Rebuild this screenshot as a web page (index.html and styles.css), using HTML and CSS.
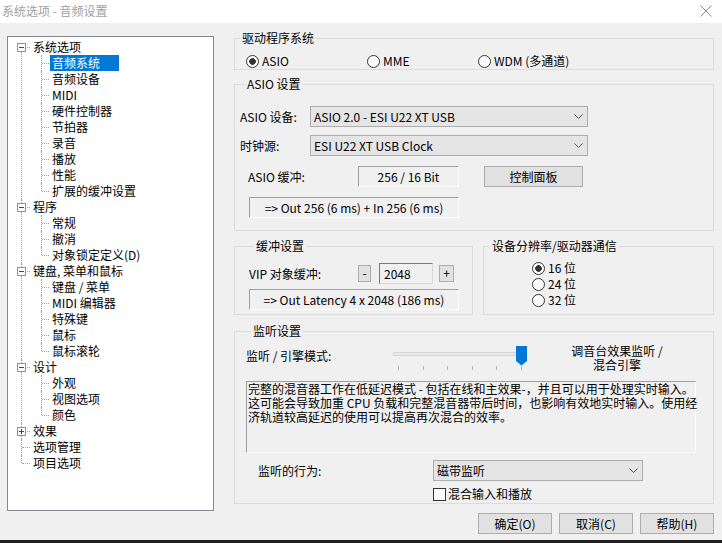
FILE: index.html
```html
<!DOCTYPE html>
<html lang="zh-CN">
<head>
  <meta charset="UTF-8" />
  <title>系统选项 - 音频设置</title>
  <link rel="stylesheet" href="styles.css">
</head>
<body>
  <div class="window">
    <div class="titlebar">
      <span class="title">系统选项 - 音频设置</span>
      <svg class="close" width="12" height="12" viewBox="0 0 12 12"><path d="M0.5 0.5L11.5 11.5M11.5 0.5L0.5 11.5" stroke="#8c8c8c" stroke-width="1" fill="none"/></svg>
    </div>

    <div class="main">
      <div class="tree-box">
        <ul class="tree">
          <li><span class="tog"></span><span class="lbl">系统选项</span>
            <ul>
              <li><span class="lbl sel">音频系统</span></li>
              <li><span class="lbl">音频设备</span></li>
              <li><span class="lbl">MIDI</span></li>
              <li><span class="lbl">硬件控制器</span></li>
              <li><span class="lbl">节拍器</span></li>
              <li><span class="lbl">录音</span></li>
              <li><span class="lbl">播放</span></li>
              <li><span class="lbl">性能</span></li>
              <li><span class="lbl">扩展的缓冲设置</span></li>
            </ul>
          </li>
          <li><span class="tog"></span><span class="lbl">程序</span>
            <ul>
              <li><span class="lbl">常规</span></li>
              <li><span class="lbl">撤消</span></li>
              <li><span class="lbl">对象锁定定义(D)</span></li>
            </ul>
          </li>
          <li><span class="tog"></span><span class="lbl">键盘, 菜单和鼠标</span>
            <ul>
              <li><span class="lbl">键盘 / 菜单</span></li>
              <li><span class="lbl">MIDI 编辑器</span></li>
              <li><span class="lbl">特殊键</span></li>
              <li><span class="lbl">鼠标</span></li>
              <li><span class="lbl">鼠标滚轮</span></li>
            </ul>
          </li>
          <li><span class="tog"></span><span class="lbl">设计</span>
            <ul>
              <li><span class="lbl">外观</span></li>
              <li><span class="lbl">视图选项</span></li>
              <li><span class="lbl">颜色</span></li>
            </ul>
          </li>
          <li><span class="tog plus"></span><span class="lbl">效果</span></li>
          <li><span class="lbl">选项管理</span></li>
          <li><span class="lbl">项目选项</span></li>
        </ul>
      </div>

      <div class="panel">
        <fieldset class="group driver">
          <legend>驱动程序系统</legend>
          <div class="driver-row">
            <label class="opt"><input type="radio" name="drv" checked>ASIO</label>
            <label class="opt"><input type="radio" name="drv">MME</label>
            <label class="opt"><input type="radio" name="drv">WDM (多通道)</label>
          </div>
        </fieldset>

        <fieldset class="group asio">
          <legend>ASIO 设置</legend>
          <div class="field-row first">
            <span class="field-label">ASIO 设备:</span>
            <div class="combo wide"><span>ASIO 2.0 - ESI U22 XT USB</span><svg width="9" height="5" viewBox="0 0 9 5"><path d="M0.5 0.5L4.5 4.5L8.5 0.5" stroke="#555" fill="none"/></svg></div>
          </div>
          <div class="field-row">
            <span class="field-label">时钟源:</span>
            <div class="combo wide"><span>ESI U22 XT USB Clock</span><svg width="9" height="5" viewBox="0 0 9 5"><path d="M0.5 0.5L4.5 4.5L8.5 0.5" stroke="#555" fill="none"/></svg></div>
          </div>
          <div class="field-row buffer-row">
            <span class="field-label indent">ASIO 缓冲:</span>
            <div class="static small">256 / 16 Bit</div>
            <button class="btn panel-btn">控制面板</button>
          </div>
          <div class="static long asio-latency">=&gt; Out 256 (6 ms) + In 256 (6 ms)</div>
        </fieldset>

        <div class="group-row">
          <fieldset class="group buffer">
            <legend>缓冲设置</legend>
            <div class="vip-row">
              <span class="vip-label">VIP 对象缓冲:</span>
              <button class="btn step">-</button>
              <div class="edit">2048</div>
              <button class="btn step plus-btn">+</button>
            </div>
            <div class="static long">=&gt; Out Latency 4 x 2048 (186 ms)</div>
          </fieldset>

          <fieldset class="group resolution">
            <legend>设备分辨率/驱动器通信</legend>
            <div class="res-list">
              <label class="opt"><input type="radio" name="res" checked>16 位</label>
              <label class="opt"><input type="radio" name="res">24 位</label>
              <label class="opt"><input type="radio" name="res">32 位</label>
            </div>
          </fieldset>
        </div>

        <fieldset class="group monitor">
          <legend>监听设置</legend>
          <div class="mode-row">
            <span class="mode-label">监听 / 引擎模式:</span>
            <svg class="slider" width="140" height="26" viewBox="0 0 140 26">
              <rect x="2.5" y="7.5" width="124" height="3" fill="#e7eaea" stroke="#d6d6d6"/>
              <path d="M7.5 21v4M32.5 21v4M56.5 21v4M81.5 21v4M105.5 21v4M130.5 21v4" stroke="#b4b4b4"/>
              <path d="M125 1h11v15l-5.5 4.5L125 16z" fill="#0078d7"/>
            </svg>
            <span class="mode-right">调音台效果监听 /<br>混合引擎</span>
          </div>
          <div class="desc">完整的混音器工作在低延迟模式 - 包括在线和主效果-，并且可以用于处理实时输入。<br>这可能会导致加重 CPU 负载和完整混音器带后时间，也影响有效地实时输入。使用经<br>济轨道较高延迟的使用可以提高再次混合的效率。</div>
          <div class="behave-row">
            <span class="behave-label">监听的行为:</span>
            <div class="combo behave"><span>磁带监听</span><svg width="9" height="5" viewBox="0 0 9 5"><path d="M0.5 0.5L4.5 4.5L8.5 0.5" stroke="#555" fill="none"/></svg></div>
          </div>
          <label class="check-row"><input type="checkbox">混合输入和播放</label>
        </fieldset>
      </div>
    </div>

    <div class="footer">
      <button class="btn dlg">确定(O)</button>
      <button class="btn dlg">取消(C)</button>
      <button class="btn dlg">帮助(H)</button>
    </div>
  </div>
</body>
</html>
```

FILE: styles.css
```css
* {
  box-sizing: border-box;
}

html, body {
  margin: 0;
  padding: 0;
  background: #1f1f1f;
  overflow: hidden;
}

body {
  font-family: "Noto Sans CJK SC", sans-serif;
  font-size: 12px;
  color: #000;
}

.window {
  width: 722px;
  height: 540px;
  background: #f0f0f0;
}

.titlebar {
  height: 23px;
  background: #fff;
  display: flex;
  align-items: center;
  justify-content: space-between;
  padding: 0 10px 1px 2px;
}

.title {
  color: #a0a0a0;
  line-height: 16px;
}

.main {
  display: flex;
  align-items: flex-start;
  padding: 7px 0 0 7px;
}

/* tree */

.tree-box {
  width: 207px;
  height: 475px;
  margin: 6px 0 -6px;
  background: #fff;
  border: 1px solid #828790;
}

.tree, .tree ul {
  list-style: none;
  margin: 0;
  padding: 0;
}

.tree {
  padding-top: 2px;
}

.tree li {
  position: relative;
  padding-left: 23px;
  line-height: 16px;
}

.tree ul li {
  padding-left: 19px;
}

.tree > li::before {
  content: "";
  position: absolute;
  left: 13px;
  top: 0;
  bottom: 0;
  border-left: 1px dotted #a0a0a0;
}

.tree > li:first-child::before {
  top: 8px;
}

.tree > li:last-child::before {
  bottom: auto;
  height: 8px;
}

.tree > li::after {
  content: "";
  position: absolute;
  left: 14px;
  top: 8px;
  width: 8px;
  border-top: 1px dotted #a0a0a0;
}

.tree ul li::before {
  content: "";
  position: absolute;
  left: 10px;
  top: 0;
  bottom: 0;
  border-left: 1px dotted #a0a0a0;
}

.tree ul li:last-child::before {
  bottom: auto;
  height: 8px;
}

.tree ul li::after {
  content: "";
  position: absolute;
  left: 11px;
  top: 8px;
  width: 7px;
  border-top: 1px dotted #a0a0a0;
}

.tog {
  position: absolute;
  left: 9px;
  top: 4px;
  width: 9px;
  height: 9px;
  border: 1px solid #919191;
  background: #fff;
  z-index: 1;
}

.tog::before {
  content: "";
  position: absolute;
  left: 1px;
  top: 3px;
  width: 5px;
  height: 1px;
  background: #2b4d8e;
}

.tog.plus::after {
  content: "";
  position: absolute;
  left: 3px;
  top: 1px;
  width: 1px;
  height: 5px;
  background: #2b4d8e;
}

.lbl {
  display: inline-block;
  height: 16px;
  padding: 0 2px;
  white-space: nowrap;
}

.lbl.sel {
  background: #0078d7;
  color: #fff;
  padding-right: 19px;
}

/* right side */

.panel {
  width: 480px;
  margin-left: 20px;
  display: flex;
  flex-direction: column;
}

.group {
  margin: 0;
  padding: 0;
  min-width: 0;
  border: 1px solid #dcdcdc;
}

.group legend {
  padding: 0 2px;
  margin-left: 5px;
  line-height: 16px;
}

input[type="radio"], input[type="checkbox"] {
  appearance: none;
  -webkit-appearance: none;
  margin: 0 3px 0 0;
  width: 13px;
  height: 13px;
  border: 1px solid #333;
  background: #fff;
  flex: none;
}

input[type="radio"] {
  border-radius: 50%;
}

input[type="radio"]:checked {
  background: radial-gradient(circle, #333 0 3px, #fff 3.6px);
}

.opt {
  display: flex;
  align-items: center;
  height: 16px;
  line-height: 16px;
}

.driver-row {
  display: grid;
  grid-template-columns: 121px 111px auto;
  margin-top: 7px;
  padding: 0 0 1px 11px;
  height: 16px;
}

.asio {
  margin-top: 6px;
  padding: 0 0 12px 5px;
}

.field-row {
  display: flex;
  align-items: center;
  height: 21px;
  margin-top: 8px;
}

.field-row.first {
  margin-top: 14px;
}

.field-label {
  width: 70px;
  white-space: nowrap;
}

.field-label.indent {
  width: 118px;
  padding-left: 8px;
}

.combo {
  display: flex;
  align-items: center;
  justify-content: space-between;
  height: 21px;
  padding: 0 4px 0 3px;
  border: 1px solid #adadad;
  background: #e5e5e5;
  white-space: nowrap;
}

.combo.wide {
  width: 278px;
}

.buffer-row {
  margin-top: 10px;
}

.static {
  height: 21px;
  line-height: 19px;
  text-align: center;
  border: 1px solid;
  border-color: #a0a0a0 #fff #fff #a0a0a0;
  white-space: nowrap;
}

.static.small {
  width: 101px;
}

.static.long {
  width: 210px;
}

.asio-latency {
  margin: 10px 0 0 9px;
}

.btn {
  font: inherit;
  color: #000;
  height: 21px;
  padding: 0;
  border: 1px solid #adadad;
  background: #e1e1e1;
}

.panel-btn {
  width: 99px;
  margin: -1px 0 0 25px;
}

.group-row {
  display: flex;
  gap: 10px;
  margin-top: 7px;
}

.buffer {
  width: 239px;
  padding: 0 0 4px 14px;
}

.vip-row {
  display: flex;
  align-items: center;
  height: 22px;
  margin-top: 8px;
}

.vip-label {
  width: 109px;
}

.step {
  width: 13px;
  height: 17px;
  line-height: 14px;
}

.plus-btn {
  width: 15px;
  margin-left: 6px;
}

.edit {
  width: 54px;
  height: 21px;
  margin-left: 8px;
  padding-left: 4px;
  line-height: 19px;
  border: 1px solid;
  border-color: #7a7a7a #d8d8d8 #d8d8d8 #7a7a7a;
}

.buffer .static.long {
  margin-top: 5px;
}

.resolution {
  width: 231px;
}

.resolution legend {
  margin-left: 6px;
}

.res-list {
  margin-top: 6px;
  padding-left: 48px;
}

.monitor {
  margin-top: 8px;
  padding: 0 0 2px 11px;
}

.mode-row {
  display: flex;
  height: 34px;
  margin-top: 5px;
}

.mode-label {
  width: 145px;
  margin-top: 4px;
  line-height: 16px;
}

.slider {
  margin-top: 1px;
  flex: none;
}

.mode-right {
  width: 122px;
  margin-left: 25px;
  text-align: center;
  line-height: 14px;
  white-space: nowrap;
}

.desc {
  width: 450px;
  height: 72px;
  margin-top: 3px;
  padding: 0 0 0 1px;
  line-height: 14px;
  white-space: nowrap;
  border: 1px solid;
  border-color: #a0a0a0 #fff #fff #a0a0a0;
}

.behave-row {
  display: flex;
  align-items: center;
  height: 21px;
  margin-top: 7px;
}

.behave-label {
  width: 187px;
  padding-left: 12px;
}

.combo.behave {
  width: 210px;
}

.check-row {
  display: flex;
  align-items: center;
  height: 14px;
  margin-top: 6px;
  padding-left: 187px;
  line-height: 14px;
}

.check-row input {
  margin-right: 2px;
}

.footer {
  display: flex;
  justify-content: flex-end;
  gap: 7px;
  padding: 8px 8px 0 0;
}

.btn.dlg {
  width: 74px;
}
```
